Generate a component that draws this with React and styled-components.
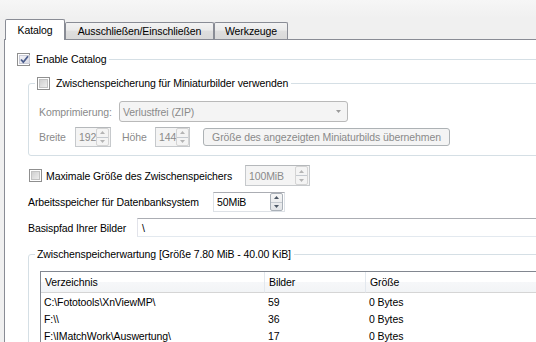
import React from "react";
import styled, { createGlobalStyle } from "styled-components";

const GlobalStyle = createGlobalStyle`
  html, body {
    margin: 0;
    padding: 0;
    background: #f0f0f0;
    overflow: hidden;
  }
  body {
    font-family: "Liberation Sans", Arial, sans-serif;
    font-size: 10.5px;
    letter-spacing: -0.1px;
    color: #1e1e1e;
  }
`;

const Window = styled.div`
  width: 536px;
  height: 342px;
  overflow: hidden;
  box-sizing: border-box;
  padding: 19px 0 0 4px;
  background: linear-gradient(#f6f6f6, #f0f0f0 18px);
`;

const TabBar = styled.div`
  display: flex;
  align-items: flex-end;
  height: 20px;
  padding-left: 1px;
  position: relative;
  z-index: 1;
`;

const Tab = styled.div`
  box-sizing: border-box;
  width: ${(p) => p.$w}px;
  height: ${(p) => (p.$active ? 21 : 17)}px;
  margin-bottom: ${(p) => (p.$active ? -1 : 0)}px;
  display: flex;
  align-items: center;
  justify-content: center;
  border: 1px solid #898c95;
  border-bottom: none;
  border-radius: 2px 2px 0 0;
  background: ${(p) =>
    p.$active ? "#fff" : "linear-gradient(#f3f3f3, #ebebeb 45%, #dedede 50%, #d9d9d9)"};
  color: #000;
  white-space: nowrap;
`;

const Panel = styled.div`
  width: 640px;
  height: 400px;
  box-sizing: border-box;
  background: #fff;
  border: 1px solid #898c95;
  padding: 12px 0 0 12px;
`;

const FlatGroup = styled.fieldset`
  margin: 0;
  padding: 0;
  min-width: 0;
  border: none;
  border-top: 1px solid #d5dfe5;
`;

const Group = styled.fieldset`
  margin: ${(p) => p.$mt}px 0 0 0;
  padding: 0;
  min-width: 0;
  border: 1px solid #d5dfe5;
  border-radius: 3px;
`;

const Legend = styled.legend`
  margin-left: ${(p) => p.$ml || 0}px;
  padding: 0 3px 0 ${(p) => p.$pl || 0}px;
  height: 14px;
  line-height: 14px;
`;

const LegendRow = styled.span`
  display: inline-flex;
  align-items: center;
  gap: 3px;
  height: 14px;
  color: #000;
`;

const Indent = styled.div`
  padding-left: 11px;
`;

const GroupBody = styled.div`
  padding: ${(p) => p.$pt}px 0 ${(p) => p.$pb}px ${(p) => p.$pl}px;
  display: flex;
  flex-direction: column;
  gap: 5px;
`;

const Row = styled.div`
  display: flex;
  align-items: center;
  height: ${(p) => p.$h}px;
  margin-top: ${(p) => p.$mt || 0}px;
  padding-left: ${(p) => p.$pl || 0}px;
`;

const Label = styled.span`
  flex: none;
  width: ${(p) => (p.$w ? `${p.$w}px` : "auto")};
  margin-left: ${(p) => p.$ml || 0}px;
  color: ${(p) => (p.$disabled ? "#8a8a8a" : "#000")};
  white-space: nowrap;
`;

const Box = styled.span`
  flex: none;
  box-sizing: border-box;
  width: 13px;
  height: 13px;
  border: 1px solid #8f8f8f;
  padding: 1px;
  background: #fff;
  display: flex;
  margin-right: ${(p) => p.$mr || 3}px;
`;

const BoxInner = styled.span`
  flex: 1;
  display: flex;
  align-items: center;
  justify-content: center;
  background: ${(p) =>
    p.$checked ? "linear-gradient(135deg, #f2f2f6, #dcdde6)" : "linear-gradient(135deg, #cfcfcf, #ededed)"};
  border: 1px solid ${(p) => (p.$checked ? "#c9cbd6" : "#c2c2c2")};
`;

const Checkbox = ({ checked, mr }) => (
  <Box $mr={mr}>
    <BoxInner $checked={checked}>
      {checked && (
        <svg width="9" height="9" viewBox="0 0 9 9">
          <path d="M1 4.5 L3.3 7.2 L8 1.2" fill="none" stroke="#4b5d8c" strokeWidth="1.8" />
        </svg>
      )}
    </BoxInner>
  </Box>
);

const Combo = styled.div`
  flex: none;
  box-sizing: border-box;
  width: ${(p) => p.$w}px;
  height: 21px;
  border: 1px solid #b9b9b9;
  border-radius: 3px;
  background: #f4f4f4;
  display: flex;
  align-items: center;
  justify-content: space-between;
  padding: 0 6px 0 3px;
  color: #8a8a8a;
`;

const Spin = styled.div`
  flex: none;
  box-sizing: border-box;
  width: ${(p) => p.$w}px;
  height: ${(p) => p.$h}px;
  border: 1px solid ${(p) => (p.$disabled ? "#c6c9cc" : "#dde1e6")};
  border-top-color: ${(p) => (p.$disabled ? "#b5b8bb" : "#abadb3")};
  background: ${(p) => (p.$disabled ? "#f4f4f4" : "#fff")};
  color: ${(p) => (p.$disabled ? "#8a8a8a" : "#000")};
  display: flex;
  align-items: center;
  padding: 0 1px 0 3px;
`;

const SpinValue = styled.span`
  flex: 1;
  white-space: nowrap;
`;

const SpinArrows = styled.span`
  flex: none;
  width: 11px;
  height: calc(100% - 2px);
  display: flex;
  flex-direction: column;
  border: 1px solid ${(p) => (p.$disabled ? "#d4d4d4" : "#a9b0b8")};
  border-radius: 2px;
  background: ${(p) => (p.$disabled ? "#f4f4f4" : "linear-gradient(#f6f6f6, #e2e4e7)")};
`;

const SpinBtn = styled.span`
  flex: 1;
  display: flex;
  align-items: center;
  justify-content: center;
  & + & {
    border-top: 1px solid ${(p) => (p.$disabled ? "#e0e0e0" : "#c4c9cf")};
  }
`;

const Tri = ({ up, color }) => (
  <svg width="5" height="3" viewBox="0 0 5 3">
    <path d={up ? "M0 3 L2.5 0 L5 3 Z" : "M0 0 L5 0 L2.5 3 Z"} fill={color} />
  </svg>
);

const SpinBox = ({ value, w, h, disabled }) => {
  const c = disabled ? "#b4b4b4" : "#4d5866";
  return (
    <Spin $w={w} $h={h} $disabled={disabled}>
      <SpinValue>{value}</SpinValue>
      <SpinArrows $disabled={disabled}>
        <SpinBtn $disabled={disabled}>
          <Tri up color={c} />
        </SpinBtn>
        <SpinBtn $disabled={disabled}>
          <Tri color={c} />
        </SpinBtn>
      </SpinArrows>
    </Spin>
  );
};

const Button = styled.div`
  flex: none;
  box-sizing: border-box;
  width: ${(p) => p.$w}px;
  height: 18px;
  margin-left: ${(p) => p.$ml}px;
  border: 1px solid #adb2b5;
  border-radius: 3px;
  background: #f4f4f4;
  color: #8a8a8a;
  display: flex;
  align-items: center;
  justify-content: center;
  white-space: nowrap;
`;

const TextField = styled.div`
  flex: 1;
  box-sizing: border-box;
  height: 19px;
  border: 1px solid #e3e9ef;
  border-top-color: #abadb3;
  border-left-color: #e2e3ea;
  display: flex;
  align-items: center;
  padding-left: 4px;
  color: #000;
`;

const Table = styled.div`
  margin-top: 10px;
  border-top: 1px solid #828790;
  border-left: 1px solid #828790;
  display: grid;
  grid-template-columns: 224px 101px 1fr;
  color: #000;
`;

const HeadCell = styled.div`
  height: 21px;
  box-sizing: border-box;
  padding-left: 4px;
  display: flex;
  align-items: center;
  border-bottom: 1px solid #d5d5d5;
  border-right: 1px solid #e3e8ee;
  background: linear-gradient(#ffffff, #ffffff 50%, #f6f7f9 51%, #f2f4f6);
`;

const Cell = styled.div`
  height: 17px;
  padding-left: 3px;
  display: flex;
  align-items: center;
  white-space: nowrap;
`;

const rows = [
  ["C:\\Fototools\\XnViewMP\\", "59", "0 Bytes"],
  ["F:\\\\", "36", "0 Bytes"],
  ["F:\\IMatchWork\\Auswertung\\", "17", "0 Bytes"],
];

export default function App() {
  return (
    <Window>
      <GlobalStyle />
      <TabBar>
        <Tab $active $w={60}>Katalog</Tab>
        <Tab $w={149}>Ausschließen/Einschließen</Tab>
        <Tab $w={74}>Werkzeuge</Tab>
      </TabBar>
      <Panel>
        <FlatGroup>
          <Legend>
            <LegendRow>
              <Checkbox checked />
              Enable Catalog
            </LegendRow>
          </Legend>
          <Indent>
            <Group $mt={10}>
              <Legend $ml={6} $pl={2}>
                <LegendRow>
                  <Checkbox />
                  Zwischenspeicherung für Miniaturbilder verwenden
                </LegendRow>
              </Legend>
              <GroupBody $pt={11} $pb={8} $pl={10}>
                <Row $h={21}>
                  <Label $w={80} $disabled>
                    Komprimierung:
                  </Label>
                  <Combo $w={229}>
                    Verlustfrei (ZIP)
                    <Tri color="#9a9a9a" />
                  </Combo>
                </Row>
                <Row $h={20}>
                  <Label $w={36} $disabled>
                    Breite
                  </Label>
                  <SpinBox value="192" w={36} h={20} disabled />
                  <Label $w={33} $ml={11} $disabled>
                    Höhe
                  </Label>
                  <SpinBox value="144" w={35} h={20} disabled />
                  <Button $w={247} $ml={13}>
                    Größe des angezeigten Miniaturbilds übernehmen
                  </Button>
                </Row>
              </GroupBody>
            </Group>

            <Row $h={21} $mt={9} $pl={1}>
              <Checkbox mr={4} />
              <Label $w={199}>Maximale Größe des Zwischenspeichers</Label>
              <SpinBox value="100MiB" w={65} h={21} disabled />
            </Row>
            <Row $h={20} $mt={6}>
              <Label $w={185}>Arbeitsspeicher für Datenbanksystem</Label>
              <SpinBox value="50MiB" w={72} h={20} />
            </Row>
            <Row $h={19} $mt={6}>
              <Label $w={109}>Basispfad Ihrer Bilder</Label>
              <TextField>\</TextField>
            </Row>

            <Group $mt={10}>
              <Legend $ml={6} $pl={2}>
                <LegendRow>Zwischenspeicherwartung [Größe 7.80 MiB - 40.00 KiB]</LegendRow>
              </Legend>
              <GroupBody $pt={0} $pb={8} $pl={11}>
                <Table>
                  <HeadCell>Verzeichnis</HeadCell>
                  <HeadCell>Bilder</HeadCell>
                  <HeadCell>Größe</HeadCell>
                  {rows.map((r) =>
                    r.map((v, i) => <Cell key={r[0] + i}>{v}</Cell>)
                  )}
                </Table>
              </GroupBody>
            </Group>
          </Indent>
        </FlatGroup>
      </Panel>
    </Window>
  );
}
